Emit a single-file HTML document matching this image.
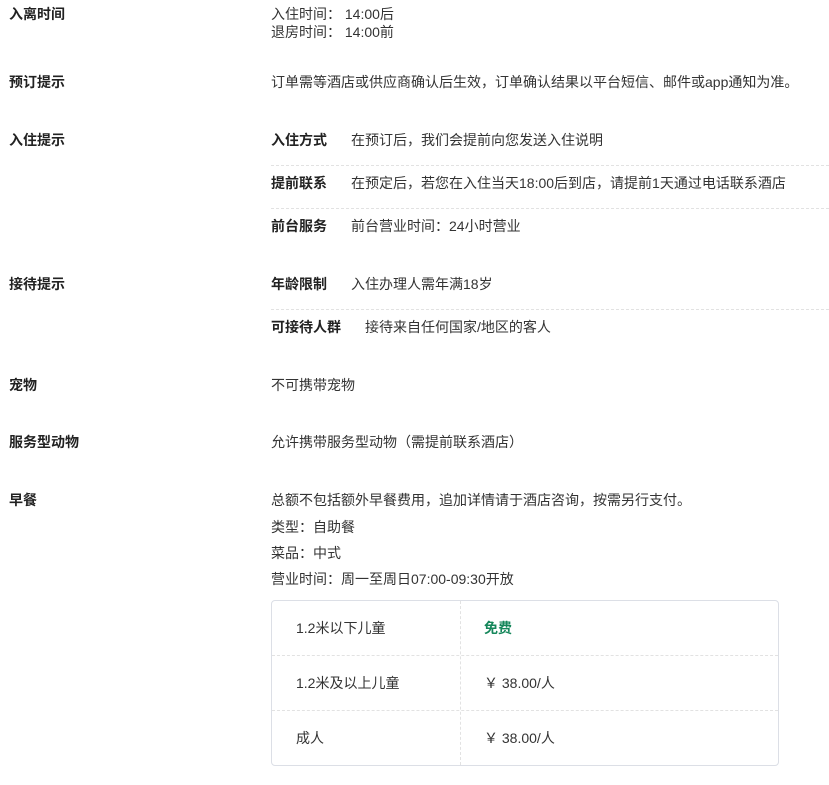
<!DOCTYPE html>
<html><head><meta charset="utf-8">
<style>
*{margin:0;padding:0;box-sizing:border-box}
body{width:829px;height:785px;background:#fff;position:relative;overflow:hidden;font-family:"Liberation Sans","Noto Sans CJK SC",sans-serif;font-size:14px;color:#333}
.t{position:absolute;line-height:18px;white-space:nowrap;transform:translateY(-9px)}
.b{font-weight:bold;color:#222}
.l{position:absolute;left:271px;width:558px;border-top:1px dashed #e2e2e2;height:0}
.tbl{position:absolute;left:271px;top:600px;width:508px;height:166px;border:1px solid #dcdfe6;border-radius:4px}
.h{position:absolute;left:0;width:100%;border-top:1px dashed #e2e2e2}
.v{position:absolute;left:188px;top:0;height:100%;border-left:1px dashed #e2e2e2}
</style></head><body>
<div class="t b" style="left:9px;top:14px">入离时间</div>
<div class="t" style="left:271px;top:14px">入住时间：&nbsp;14:00后</div>
<div class="t" style="left:271px;top:32px">退房时间：&nbsp;14:00前</div>

<div class="t b" style="left:9px;top:82px">预订提示</div>
<div class="t" style="left:271px;top:82px">订单需等酒店或供应商确认后生效，订单确认结果以平台短信、邮件或app通知为准。</div>

<div class="t b" style="left:9px;top:140px">入住提示</div>
<div class="t b" style="left:271px;top:140px">入住方式</div>
<div class="t" style="left:351px;top:140px">在预订后，我们会提前向您发送入住说明</div>
<div class="l" style="top:165px"></div>
<div class="t b" style="left:271px;top:183px">提前联系</div>
<div class="t" style="left:351px;top:183px">在预定后，若您在入住当天18:00后到店，请提前1天通过电话联系酒店</div>
<div class="l" style="top:208px"></div>
<div class="t b" style="left:271px;top:226px">前台服务</div>
<div class="t" style="left:351px;top:226px">前台营业时间：24小时营业</div>

<div class="t b" style="left:9px;top:284px">接待提示</div>
<div class="t b" style="left:271px;top:284px">年龄限制</div>
<div class="t" style="left:351px;top:284px">入住办理人需年满18岁</div>
<div class="l" style="top:309px"></div>
<div class="t b" style="left:271px;top:327px">可接待人群</div>
<div class="t" style="left:365px;top:327px">接待来自任何国家/地区的客人</div>

<div class="t b" style="left:9px;top:385px">宠物</div>
<div class="t" style="left:271px;top:385px">不可携带宠物</div>

<div class="t b" style="left:9px;top:442px">服务型动物</div>
<div class="t" style="left:271px;top:442px">允许携带服务型动物（需提前联系酒店）</div>

<div class="t b" style="left:9px;top:500px">早餐</div>
<div class="t" style="left:271px;top:500px">总额不包括额外早餐费用，追加详情请于酒店咨询，按需另行支付。</div>
<div class="t" style="left:271px;top:527px">类型：自助餐</div>
<div class="t" style="left:271px;top:553px">菜品：中式</div>
<div class="t" style="left:271px;top:579px">营业时间：周一至周日07:00-09:30开放</div>

<div class="tbl">
<div class="v"></div>
<div class="h" style="top:54px"></div>
<div class="h" style="top:109px"></div>
</div>
<div class="t" style="left:296px;top:628px">1.2米以下儿童</div>
<div class="t b" style="left:484px;top:628px;color:#16875b">免费</div>
<div class="t" style="left:296px;top:683px">1.2米及以上儿童</div>
<div class="t" style="left:484px;top:683px">￥ 38.00/人</div>
<div class="t" style="left:296px;top:738px">成人</div>
<div class="t" style="left:484px;top:738px">￥ 38.00/人</div>
</body></html>
